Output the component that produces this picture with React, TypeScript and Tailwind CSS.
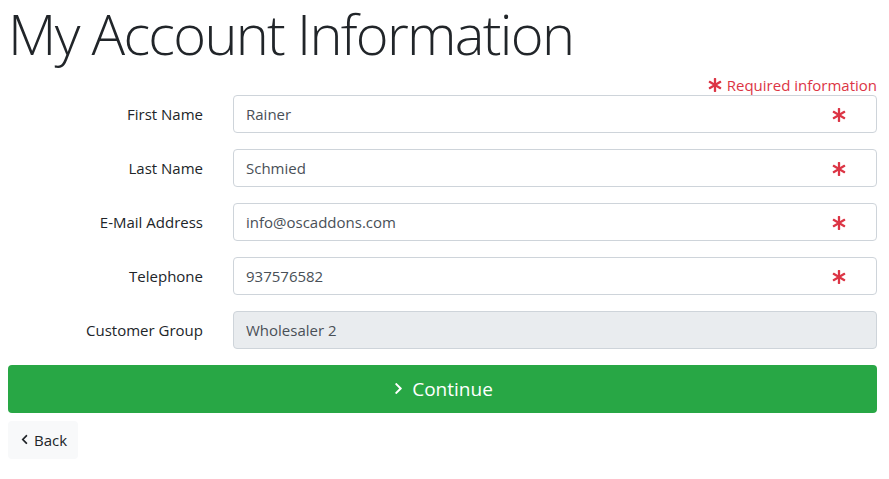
import { FaAsterisk, FaChevronLeft, FaChevronRight } from "react-icons/fa";

const fields = [
  { label: "First Name", value: "Rainer", required: true },
  { label: "Last Name", value: "Schmied", required: true },
  { label: "E-Mail Address", value: "info@oscaddons.com", required: true },
  { label: "Telephone", value: "937576582", required: true },
  { label: "Customer Group", value: "Wholesaler 2", required: false },
];

export default function App() {
  return (
    <div
      className="min-h-screen bg-white pl-2 pr-3 text-[#212529]"
      style={{ fontFamily: '"Open Sans", sans-serif' }}
    >
      <h1 className="-mt-[3px] mb-[5px] text-[56px] font-light leading-[1.3] tracking-[-1.7px]">
        My Account Information
      </h1>

      <p className="flex h-[20px] items-center justify-end gap-[5px] text-[15px] text-[#dc3545]">
        <FaAsterisk className="h-[14px] w-[14px]" />
        Required information
      </p>

      <form>
        {fields.map((f) => (
          <div key={f.label} className="mb-4 flex items-center">
            <label className="w-[225px] shrink-0 pr-[30px] pt-[1px] text-right text-[15px]">
              {f.label}
            </label>
            <div className="relative flex-1">
              <input
                readOnly
                value={f.value}
                className={
                  "h-[38px] w-full rounded border border-[#ced4da] px-3 pt-[1px] text-[15px] text-[#495057] outline-none " +
                  (f.required ? "bg-white" : "bg-[#e9ecef]")
                }
              />
              {f.required && (
                <FaAsterisk className="absolute right-[31px] top-[13px] h-[14px] w-[14px] text-[#dc3545]" />
              )}
            </div>
          </div>
        ))}

        <button
          type="button"
          className="flex h-[48px] w-full items-center justify-center gap-[7px] rounded bg-[#28a745] text-[19px] text-white"
        >
          <FaChevronRight className="h-[13px] w-[13px]" />
          Continue
        </button>

        <button
          type="button"
          className="mt-2 flex h-[38px] items-center gap-[4px] rounded bg-[#f8f9fa] pl-[11px] pr-[11px] text-[15px] text-[#212529]"
        >
          <FaChevronLeft className="h-[11px] w-[11px]" />
          Back
        </button>
      </form>
    </div>
  );
}
